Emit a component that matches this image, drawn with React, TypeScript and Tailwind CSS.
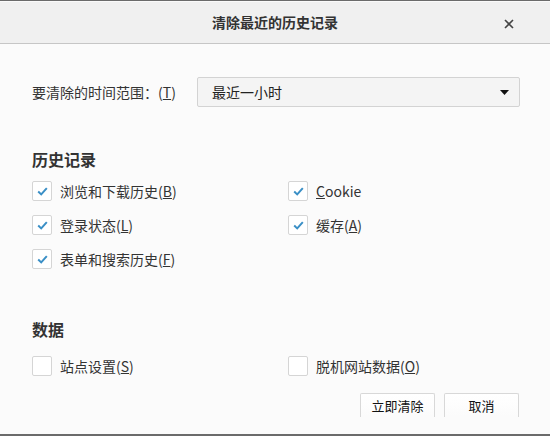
import { ReactNode } from "react";

const FONT = { fontFamily: '"Noto Sans CJK SC", "Liberation Sans", sans-serif' };

function Check({ checked, children }: { checked: boolean; children: ReactNode }) {
  return (
    <div className="flex items-center h-[34px]">
      <span className="w-[20px] h-[20px] border border-[#d5d5d5] bg-white rounded-[2px] flex items-center justify-center">
        {checked && (
          <svg width="11" height="9" viewBox="0 0 11 9">
            <path d="M1.2 4.6 L4.2 7.4 L9.8 1.2" fill="none" stroke="#3a8fc6" strokeWidth="2" />
          </svg>
        )}
      </span>
      <span className="ml-[8px] text-[14px] text-[#333]">{children}</span>
    </div>
  );
}

export default function App() {
  return (
    <div
      className="relative w-[550px] h-[436px] flex flex-col bg-[#fbfbfb] border-t border-b-2 border-[#6b6b6b] overflow-hidden"
      style={FONT}
    >
      {/* Header */}
      <div className="relative h-[43px] bg-[#f0f0f0] border-t border-t-[#fafafa] border-b border-b-[#c6c6c6] flex items-center justify-center">
        <span className="text-[14px] font-bold text-[#333]">清除最近的历史记录</span>
        <svg className="absolute right-[36px] top-[17px]" width="10" height="10" viewBox="0 0 10 10">
          <path d="M1 1 L9 9 M9 1 L1 9" stroke="#444" strokeWidth="1.6" />
        </svg>
      </div>

      <div className="flex flex-col pl-[32px] pr-[30px] pt-[33px]">
        {/* Time range */}
        <div className="flex items-center h-[30px]">
          <span className="text-[14px] text-[#333] w-[165px]">
            要清除的时间范围：(<u>T</u>)
          </span>
          <div className="flex-1 h-[30px] bg-[#f4f4f4] border border-[#d3d3d3] rounded-[2px] flex items-center justify-between pl-[14px] pr-[10px]">
            <span className="text-[14px] text-[#222]">最近一小时</span>
            <svg width="9" height="5" viewBox="0 0 9 5">
              <path d="M0 0 L9 0 L4.5 5 Z" fill="#111" />
            </svg>
          </div>
        </div>

        {/* History */}
        <div className="mt-[41px] h-[22px] flex items-center text-[16px] font-bold text-[#333]">历史记录</div>
        <div className="mt-[4px] grid grid-cols-[256px_1fr]">
          <Check checked>
            浏览和下载历史(<u>B</u>)
          </Check>
          <Check checked>
            <u>C</u>ookie
          </Check>
          <Check checked>
            登录状态(<u>L</u>)
          </Check>
          <Check checked>
            缓存(<u>A</u>)
          </Check>
          <Check checked>
            表单和搜索历史(<u>F</u>)
          </Check>
        </div>

        {/* Data */}
        <div className="mt-[42px] h-[22px] flex items-center text-[16px] font-bold text-[#333]">数据</div>
        <div className="mt-[9px] grid grid-cols-[256px_1fr]">
          <Check checked={false}>
            站点设置(<u>S</u>)
          </Check>
          <Check checked={false}>
            脱机网站数据(<u>O</u>)
          </Check>
        </div>

        {/* Buttons */}
        <div className="mt-[10px] mr-[1px] flex justify-end gap-[9px]">
          <button className="w-[75px] h-[24px] bg-gradient-to-b from-white to-[#fbfbfb] border border-b-0 border-[#d8d8d8] rounded-t-[2px] text-[13px] text-[#111]">
            立即清除
          </button>
          <button className="w-[75px] h-[24px] bg-gradient-to-b from-white to-[#fbfbfb] border border-b-0 border-[#d8d8d8] rounded-t-[2px] text-[13px] text-[#111]">
            取消
          </button>
        </div>
      </div>
    </div>
  );
}
